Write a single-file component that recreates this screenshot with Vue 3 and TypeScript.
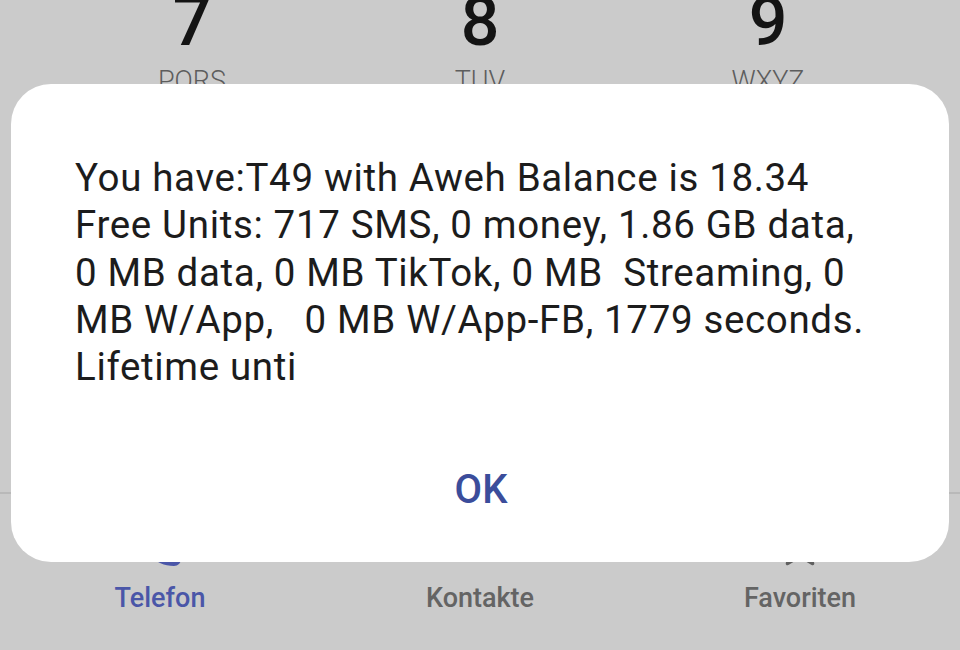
<template>
  <div class="screen">
    <div class="keypad">
      <div v-for="key in keys" :key="key.digit" class="key">
        <span class="digit">{{ key.digit }}</span>
        <span class="letters">{{ key.letters }}</span>
      </div>
    </div>

    <nav class="tabs">
      <div class="tab active">
        <svg class="tab-icon" viewBox="0 0 44 44">
          <path d="M9 2h6l4 10-5 5c3 6 8 11 14 14l5-5 10 4v7c0 4-3 7-7 7C17 44 2 28 2 9c0-4 3-7 7-7z" fill="#4a56a8" />
        </svg>
        <span>Telefon</span>
      </div>
      <div class="tab">
        <span class="tab-icon"></span>
        <span>Kontakte</span>
      </div>
      <div class="tab">
        <svg class="tab-icon" viewBox="0 0 44 44">
          <path d="M22 3l5.500 13.500 14.500 1-11 9.500 3.500 14.500-12.500-7.500-12.500 7.500 3.500-14.500-11-9.500 14.500-1z" fill="none" stroke="#5f5f5f" stroke-width="3.500" stroke-linejoin="round" />
        </svg>
        <span>Favoriten</span>
      </div>
    </nav>

    <div class="dialog">
      <p class="message">{{ message }}</p>
      <button class="ok">OK</button>
    </div>
  </div>
</template>

<script setup lang="ts">
const keys = [
  { digit: "7", letters: "PQRS" },
  { digit: "8", letters: "TUV" },
  { digit: "9", letters: "WXYZ" }
];
const message =
  "You have:T49 with Aweh Balance is 18.34\nFree Units: 717 SMS, 0 money, 1.86 GB data,\n0 MB data, 0 MB TikTok, 0 MB  Streaming, 0\nMB W/App,   0 MB W/App-FB, 1779 seconds.\nLifetime unti";
</script>

<style scoped>
.screen {
  position: relative;
  width: 960px;
  height: 650px;
  overflow: hidden;
  background: #cbcbcb;
  font-family: Roboto, "Liberation Sans", sans-serif;
  display: flex;
  flex-direction: column;
}
.keypad {
  display: grid;
  grid-template-columns: repeat(3, 288px);
  padding: 0 48px;
  height: 510px;
  margin-top: -18px;
  flex-shrink: 0;
}
.key {
  display: flex;
  flex-direction: column;
  align-items: center;
}
.digit {
  font-size: 68px;
  font-weight: 500;
  line-height: 80px;
  color: #141414;
}
.letters {
  font-size: 27px;
  font-weight: 300;
  line-height: 32px;
  margin-top: 3px;
  color: #5d5d5d;
}
.tabs {
  display: grid;
  grid-template-columns: repeat(3, 320px);
  border-top: 2px solid #b9b9b9;
  height: 156px;
}
.tab {
  display: flex;
  flex-direction: column;
  align-items: center;
  padding-top: 28px;
  font-size: 27px;
  font-weight: 500;
  line-height: 34px;
  color: #646464;
}
.tab.active {
  color: #4a56a8;
}
.tab-icon {
  width: 44px;
  height: 44px;
  margin-bottom: 15px;
  display: block;
}
.dialog {
  position: absolute;
  left: 11px;
  top: 84px;
  width: 938px;
  height: 478px;
  box-sizing: border-box;
  padding: 70px 62px 0 64px;
  background: #fff;
  border-radius: 40px;
  display: flex;
  flex-direction: column;
  align-items: center;
}
.message {
  margin: 0;
  width: 100%;
  height: 313px;
  font-size: 38.5px;
  letter-spacing: 0.65px;
  line-height: 47.3px;
  color: #1c1c1c;
  white-space: pre-wrap;
}
.ok {
  border: 0;
  padding: 0;
  background: none;
  font-family: inherit;
  font-size: 40px;
  font-weight: 500;
  line-height: 46px;
  color: #3b4d9b;
}
</style>
